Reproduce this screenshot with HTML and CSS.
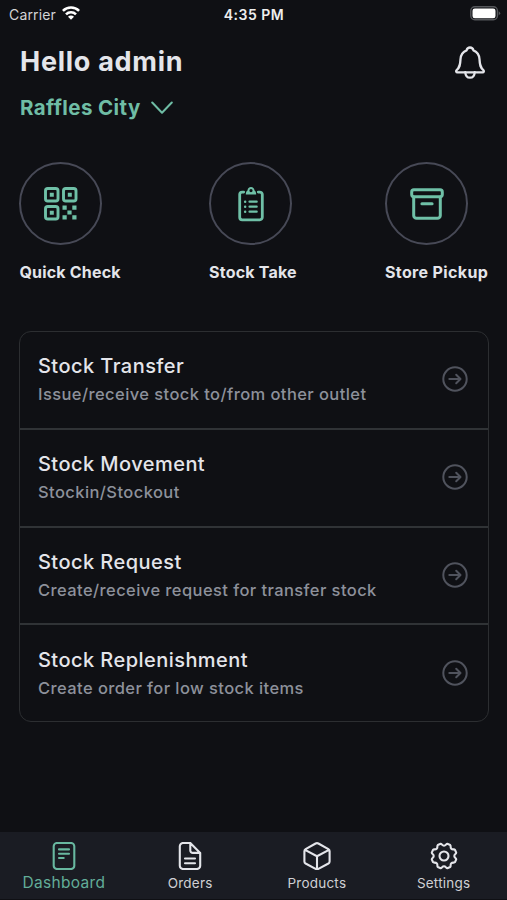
FILE: index.html
```html
<!DOCTYPE html>
<html lang="en">
<head>
<meta charset="utf-8">
<title>Dashboard</title>
<link rel="stylesheet" href="styles.css">
</head>
<body>
<div class="app">
  <div class="status">
    <div class="carrier"><span class="carrier-name">Carrier</span>
      <svg class="wifi" width="18" height="14" viewBox="0 0 18 14"><g fill="none" stroke="#fff" stroke-width="2.6"><path d="M.9 4.900a11.500 11.500 0 0 1 16.200 0"/><path d="M4 8.300a7.100 7.100 0 0 1 10 0"/></g><path d="M9 13.800 6 10.700a4.200 4.200 0 0 1 6 0z" fill="#fff"/></svg>
    </div>
    <span class="clock">4:35 PM</span>
    <svg class="battery" width="31" height="15" viewBox="0 0 31 15"><rect x=".8" y=".8" width="26.600" height="13" rx="4" fill="none" stroke="#55575b" stroke-width="1.400"/><rect x="2.500" y="2.400" width="23" height="9.800" rx="2.300" fill="#fff"/><path d="M28.700 5.200q3 2.100 0 4.400z" fill="#55575b"/></svg>
  </div>
  <header class="header">
    <div>
      <h1 class="hello">Hello admin</h1>
      <div class="outlet"><span class="outlet-name">Raffles City</span>
        <svg width="22" height="14" viewBox="0 0 22 14" fill="none" stroke="currentColor" stroke-width="2" stroke-linecap="round" stroke-linejoin="round"><path d="m1.200 1.500 9.800 10.300 9.800-10.300"/></svg>
      </div>
    </div>
    <svg class="bell" width="30" height="34" viewBox="0 0 30 34" fill="none" stroke="#e4e5ea" stroke-width="2.300" stroke-linecap="round" stroke-linejoin="round"><path d="M11.500 4.400C12 2.700 13.300 1.500 15 1.500s3 1.200 3.500 2.900c4.100 1.800 5.800 4.700 6 8.900.3 6 .9 8.300 3.900 10.900.8.900.5 2.100-.8 2.100H2.400c-1.300 0-1.600-1.200-.8-2.100 3-2.600 3.600-4.900 3.900-10.900.2-4.200 1.900-7.100 6-8.900z"/><path d="M10.300 26.200c.2 3.400 2 5.500 4.700 5.500s4.500-2.100 4.700-5.500"/></svg>
  </header>
  <div class="actions">
    <div class="action"><div class="ring">
      <svg width="34" height="34" viewBox="0 0 34 34"><g fill="none" stroke="currentColor" stroke-width="2.900"><rect x="1.500" y="1.500" width="12.500" height="12.500" rx="2.300"/><rect x="19.500" y="1.500" width="12.500" height="12.500" rx="2.300"/><rect x="1.500" y="19.500" width="12.500" height="12.500" rx="2.300"/></g><g fill="currentColor"><path d="M5.800 5.800h4v4h-4zM23.800 5.800h4v4h-4zM5.800 23.800h4v4h-4z"/><path d="M18.500 18.500h4.200v4.200h-4.200zM28.300 18.500h4.200v4.200h-4.200zM23.400 23.400h4.200v4.200h-4.200zM18.500 28.300h4.200v4.200h-4.200zM28.300 28.300h4.200v4.200h-4.200z"/></g></svg>
    </div><span class="label">Quick Check</span></div>
    <div class="action"><div class="ring">
      <svg width="26" height="36" viewBox="0 0 26 36"><g fill="none" stroke="currentColor" stroke-width="2.800" stroke-linecap="round" stroke-linejoin="round"><path d="M5.700 6.100H4.200a2.500 2.500 0 0 0-2.500 2.500v22.700a2.500 2.500 0 0 0 2.500 2.500h17.600a2.500 2.500 0 0 0 2.500-2.500V8.600a2.500 2.500 0 0 0-2.500-2.500h-1.500"/><path d="M11.500 15.700h7.200M11.500 20.700h7.200M11.500 25.700h7.200" stroke-width="2.200"/><path d="M7.100 15.700h.1M7.100 20.700h.1M7.100 25.700h.1" stroke-width="2.400"/></g><path fill="currentColor" fill-rule="evenodd" d="M7.800 8.400c0-2.500.8-3.600 1.700-4C9.700 2.300 11 .9 13 .9s3.300 1.400 3.500 3.500c.9.400 1.700 1.500 1.700 4zM13 3a1.600 1.600 0 1 0 0 3.200A1.600 1.600 0 0 0 13 3z"/></svg>
    </div><span class="label">Stock Take</span></div>
    <div class="action"><div class="ring">
      <svg width="34" height="32" viewBox="0 0 34 32" fill="none" stroke="currentColor" stroke-width="3" stroke-linecap="round" stroke-linejoin="round"><rect x="1.700" y="1.800" width="30.600" height="7" rx="2.200"/><path d="M3.700 9v18.400a2.900 2.900 0 0 0 2.900 2.900h20.800a2.900 2.900 0 0 0 2.900-2.900V9M11.900 15.700h10.200"/></svg>
    </div><span class="label wide">Store Pickup</span></div>
  </div>
  <main class="menu">
    <div class="row"><div class="text"><div class="title">Stock Transfer</div><div class="sub">Issue/receive stock to/from other outlet</div></div><svg class="go" viewBox="0 0 26 26"><circle cx="13" cy="13" r="11.700"/><path d="M7.300 13h11M14.200 8.700l4.300 4.300-4.300 4.300"/></svg></div>
    <div class="row"><div class="text"><div class="title">Stock Movement</div><div class="sub">Stockin/Stockout</div></div><svg class="go" viewBox="0 0 26 26"><circle cx="13" cy="13" r="11.700"/><path d="M7.300 13h11M14.200 8.700l4.300 4.300-4.300 4.300"/></svg></div>
    <div class="row"><div class="text"><div class="title">Stock Request</div><div class="sub">Create/receive request for transfer stock</div></div><svg class="go" viewBox="0 0 26 26"><circle cx="13" cy="13" r="11.700"/><path d="M7.300 13h11M14.200 8.700l4.300 4.300-4.300 4.300"/></svg></div>
    <div class="row"><div class="text"><div class="title">Stock Replenishment</div><div class="sub">Create order for low stock items</div></div><svg class="go" viewBox="0 0 26 26"><circle cx="13" cy="13" r="11.700"/><path d="M7.300 13h11M14.200 8.700l4.300 4.300-4.300 4.300"/></svg></div>
  </main>
  <nav class="tabs">
    <div class="tab active"><svg class="icon" viewBox="0 0 28 28"><rect x="3.700" y="1" width="20.600" height="26" rx="3.200"/><path d="M9 7.400h10M9 11.700h10M9 16h4.700"/></svg><span>Dashboard</span></div>
    <div class="tab"><svg class="icon" viewBox="0 0 28 28"><path d="M14.300 1H7a3.200 3.200 0 0 0-3.200 3.200v19.600A3.200 3.200 0 0 0 7 27h14a3.200 3.200 0 0 0 3.200-3.200V10.900zM14.300 1v7.400a2.500 2.500 0 0 0 2.500 2.500h7.400M9 16.500h10M9 21.300h10"/></svg><span>Orders</span></div>
    <div class="tab"><svg class="icon" viewBox="0 0 28 28"><path d="M12.600 1.500a2.800 2.800 0 0 1 2.800 0l10 5.700c.8.500 1.200 1.200 1.200 2.100v10.100c0 .9-.4 1.600-1.200 2.100l-10 5.400a2.800 2.800 0 0 1-2.800 0l-10-5.400c-.8-.5-1.200-1.200-1.200-2.100V9.300c0-.9.400-1.600 1.200-2.100zM2 7.900l12 6.300 12-6.300M14 14.200V27"/></svg><span>Products</span></div>
    <div class="tab"><svg class="icon" viewBox="-14 -14 28 28"><path d="M10.300 0C10.300 1.900 12.200 2 12.200 3.300L11 6.200C10.200 7.200 8.600 5.900 7.300 7.300C5.900 8.600 7.200 10.200 6.200 11L3.300 12.200C2 12.200 1.900 10.300 0 10.300C-1.900 10.300-2 12.200-3.300 12.200L-6.200 11C-7.200 10.200-5.900 8.600-7.300 7.300C-8.600 5.900-10.200 7.200-11 6.200L-12.200 3.300C-12.200 2-10.300 1.900-10.300 0C-10.300-1.900-12.200-2-12.200-3.300L-11-6.200C-10.200-7.200-8.600-5.900-7.300-7.300C-5.900-8.600-7.200-10.200-6.200-11L-3.300-12.200C-2-12.200-1.900-10.300 0-10.300C1.900-10.300 2-12.200 3.300-12.200L6.200-11C7.200-10.200 5.900-8.600 7.300-7.300C8.600-5.900 10.200-7.200 11-6.200L12.200-3.300C12.200-2 10.300-1.900 10.300 0Z"/><circle r="4.500"/></svg><span>Settings</span></div>
  </nav>
</div>
</body>
</html>
```
FILE: styles.css
```css
* { box-sizing: border-box; }
body {
  margin: 0;
  background: #0f1014;
  color: #e4e5ea;
  font-family: Inter, "Liberation Sans", sans-serif;
}
svg { display: block; flex: none; }
.app { height: 900px; display: flex; flex-direction: column; overflow: hidden; }
.status {
  height: 28px;
  display: grid;
  grid-template-columns: 1fr auto 1fr;
  align-items: center;
  padding: 0 6px 0 9px;
}
.carrier { display: flex; align-items: center; gap: 6px; font-size: 14px; color: #d3d4d6; letter-spacing: .15px; }
.wifi { margin-top: -2px; }
.clock { margin-left: -2px; font-size: 14px; font-weight: 600; letter-spacing: .5px; color: #eee; }
.battery { justify-self: end; margin-top: -1px; }
.header { display: flex; justify-content: space-between; padding: 16px 22px 0 20px; height: 134px; }
.hello { margin: 0; font-size: 27px; line-height: 36px; font-weight: 700; letter-spacing: .72px; white-space: nowrap; }
.outlet { display: flex; align-items: center; gap: 10px; margin-top: 13px; font-size: 20.5px; line-height: 30px; font-weight: 700; letter-spacing: .4px; color: #6fbda5; }
.bell { margin-top: 2px; }
.actions { display: flex; justify-content: space-between; padding: 0 18.8px 0 19.4px; height: 169px; }
.action { display: flex; flex-direction: column; align-items: flex-start; }
.ring { width: 83px; height: 83px; border: 2px solid #474956; border-radius: 50%; display: flex; align-items: center; justify-content: center; color: #6fc0a7; }
.label { margin-top: 16px; font-size: 16px; line-height: 22px; font-weight: 700; letter-spacing: .2px; white-space: nowrap; }
.wide { letter-spacing: .36px; }
.menu { margin: 0 18px 0 19px; height: 391px; border: 1px solid #2c2e31; border-radius: 12px; display: grid; grid-template-rows: repeat(3, 97.75px) 1fr; }
.row { display: flex; align-items: center; justify-content: space-between; padding: 0 20px 0 18px; white-space: nowrap; border-bottom: 2px solid #303336; }
.row:last-child { border-bottom: 0; }
.text { padding-top: 1px; }
.title { font-size: 20px; line-height: 28px; font-weight: 500; letter-spacing: .45px; }
.sub { font-size: 16.5px; line-height: 28px; font-weight: 500; letter-spacing: .42px; color: #8d919b; }
.go { width: 26px; height: 26px; margin-top: -1px; fill: none; stroke: #50535d; stroke-width: 2; stroke-linecap: round; stroke-linejoin: round; }
.tabs { margin-top: auto; height: 68px; background: #1a1c23; border-bottom: 1px solid #0f1014; display: grid; grid-template-columns: repeat(4, 1fr); }
.tab { display: flex; flex-direction: column; align-items: center; padding-top: 10px; font-size: 13.5px; line-height: 22px; letter-spacing: .22px; color: #cfd0d4; }
.tab span { margin-top: 2px; }
.icon { width: 28px; height: 28px; fill: none; stroke: #e4e5ea; stroke-width: 2.1; stroke-linecap: round; stroke-linejoin: round; }
.active { padding-left: 1px; font-size: 15.5px; letter-spacing: .3px; color: #62ad98; }
.active .icon { stroke: #68b8a0; }
```
